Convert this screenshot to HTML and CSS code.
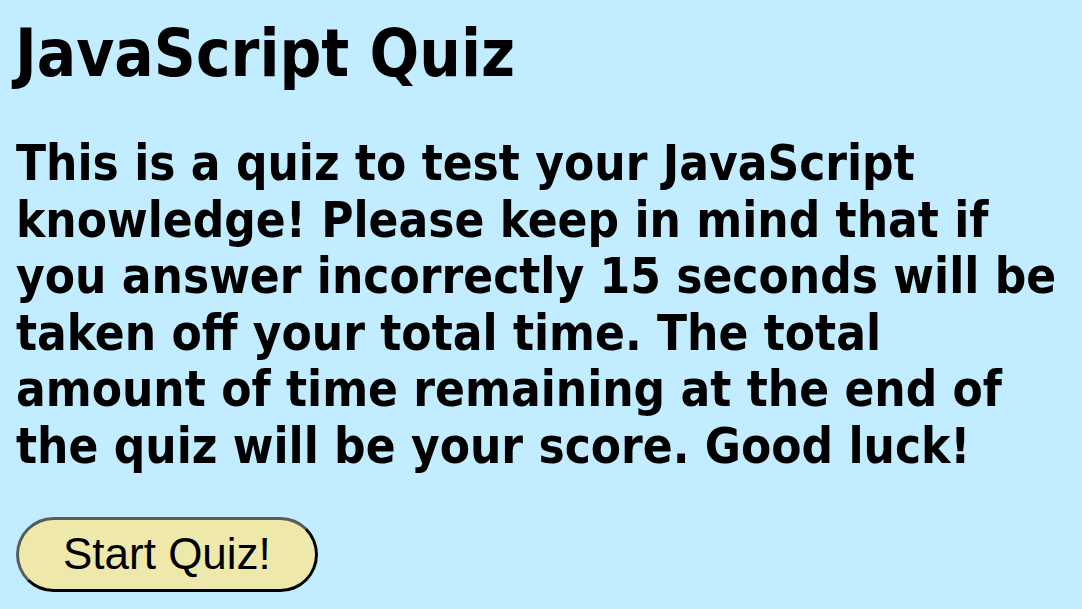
FILE: index.html
```html
<!DOCTYPE html>
<html lang="en">
<head>
<meta charset="utf-8">
<title>JavaScript Quiz</title>
<link rel="stylesheet" href="styles.css">
</head>
<body>
<main class="quiz">
  <h1 class="quiz-title">JavaScript Quiz</h1>
  <p class="quiz-intro">This is a quiz to test your JavaScript knowledge! Please keep in mind that if you answer incorrectly 15 seconds will be taken off your total time. The total amount of time remaining at the end of the quiz will be your score. Good luck!</p>
  <button class="start-btn" type="button">Start Quiz!</button>
</main>
</body>
</html>
```

FILE: styles.css
```css
html, body {
  margin: 0;
  padding: 0;
  background: #c2ecff;
}

body {
  font-family: "DejaVu Sans", "Liberation Sans", sans-serif;
  font-stretch: condensed;
  color: #000;
}

.quiz {
  padding: 14px 16px 0 16px;
  display: flex;
  flex-direction: column;
  align-items: flex-start;
}

.quiz-title {
  margin: 0 0 0 -1px;
  font-size: 65px;
  font-weight: bold;
  line-height: 80px;
}

.quiz-intro {
  margin: 42px 0 0 0;
  max-width: 1050px;
  font-size: 49px;
  font-weight: bold;
  line-height: 56.6px;
}

.start-btn {
  margin-top: 41px;
  font-family: "Liberation Sans", Arial, sans-serif;
  font-stretch: normal;
  font-size: 44px;
  color: #000;
  background: #eee8aa;
  border: 3px solid;
  border-color: #5a5a5a #000 #000 #5a5a5a;
  border-radius: 40px;
  padding: 9px 44px 10px;
  line-height: 50px;
}
```
